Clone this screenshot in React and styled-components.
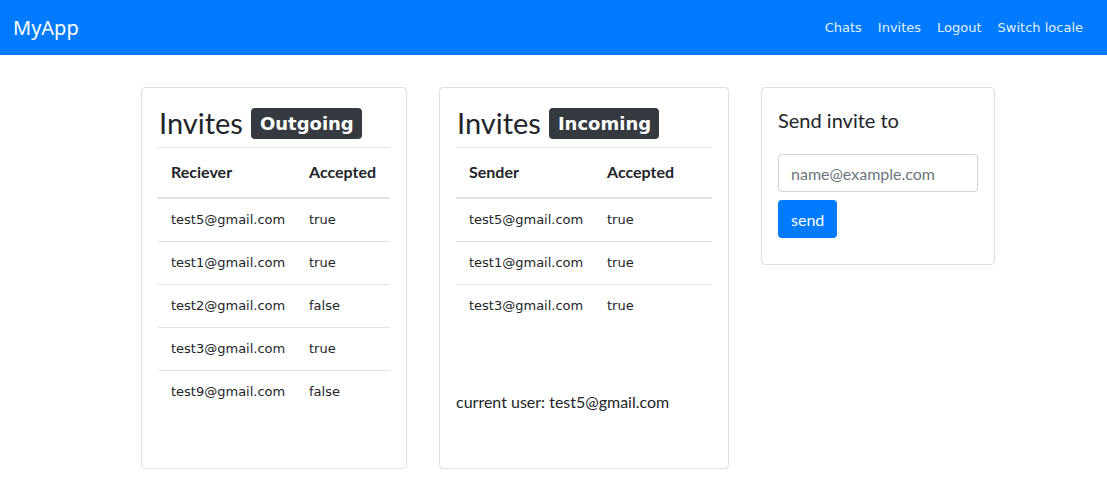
import styled, { createGlobalStyle } from 'styled-components';

const sans = `Lato, 'Segoe UI', 'Noto Sans', sans-serif`;
const verdana = `'DejaVu Sans', Verdana, sans-serif`;

const GlobalStyle = createGlobalStyle`
    body {
        margin: 0;
        background: #fff;
        color: #212529;
        font-family: ${sans};
    }
`

const Navbar = styled.nav`
    height: 55px;
    background: #007bff;
    display: flex;
    align-items: center;
    justify-content: space-between;
    padding: 0 24px 0 13px;
    box-sizing: border-box;
`

const Brand = styled.span`
    color: #fff;
    font-size: 20px;
    font-family: 'Noto Sans', sans-serif;
`

const NavLinks = styled.div`
    display: flex;
    gap: 16px;
`

const NavLink = styled.a`
    color: rgba(255, 255, 255, 0.9);
    font-family: ${verdana};
    font-size: 13px;
    text-decoration: none;
`

const Main = styled.main`
    display: flex;
    align-items: flex-start;
    gap: 32px;
    padding: 32px 0 0 141px;
`

const Card = styled.section`
    width: ${p => p.$width}px;
    min-width: 0;
    flex-shrink: 0;
    min-height: ${p => p.$minHeight || 0}px;
    box-sizing: border-box;
    border: 1px solid rgba(0, 0, 0, 0.125);
    border-radius: 4px;
    padding: ${p => p.$padding || '15px 16px 16px 16px'};
    display: flex;
    flex-direction: column;
`

const Heading = styled.h3`
    margin: 0;
    font-size: 29px;
    font-weight: 400;
    line-height: 40px;
    display: flex;
    align-items: center;
    gap: 8px;
    padding-left: 1px;
`

const Badge = styled.span`
    background: #343a40;
    color: #fff;
    font-family: ${verdana};
    font-weight: 700;
    font-size: 18px;
    line-height: 22px;
    padding: 5px 8px 4px 9px;
    border-radius: 4px;
`

const Rule = styled.hr`
    margin: 4px 0 0;
    border: 0;
    border-top: 1px solid rgba(0, 0, 0, 0.1);
`

const Table = styled.table`
    width: 100%;
    border-collapse: collapse;
    table-layout: fixed;

    th {
        text-align: left;
        font-weight: 700;
        font-size: 16px;
        line-height: 24px;
        padding: 12px 12px 13px 13px;
        border-bottom: 2px solid #dee2e6;
    }

    th:first-child {
        width: 113px;
    }

    td {
        font-family: ${verdana};
        font-size: 13px;
        line-height: 18px;
        padding: 12px 0 12px 13px;
        border-top: 1px solid #dee2e6;
        white-space: nowrap;
    }

    tbody tr:first-child td {
        border-top: 0;
    }
`

const CurrentUser = styled.p`
    margin: 63px 0 0;
    font-size: 16px;
    line-height: 24px;
`

const FormTitle = styled.h5`
    margin: 0 0 20px;
    font-size: 20px;
    font-weight: 400;
    line-height: 28px;
`

const Input = styled.input`
    width: 200px;
    height: 38px;
    box-sizing: border-box;
    border: 1px solid #ced4da;
    border-radius: 4px;
    padding: 6px 12px;
    font-family: ${sans};
    font-size: 16px;
    color: #495057;

    &::placeholder {
        color: #6c757d;
    }
`

const SendButton = styled.button`
    align-self: flex-start;
    margin-top: 8px;
    height: 38px;
    padding: 0 13px;
    border: 0;
    border-radius: 4px;
    background: #007bff;
    color: #fff;
    font-family: ${sans};
    font-size: 16px;
`

const outgoing = [
    ['test5@gmail.com', 'true'],
    ['test1@gmail.com', 'true'],
    ['test2@gmail.com', 'false'],
    ['test3@gmail.com', 'true'],
    ['test9@gmail.com', 'false'],
]

const incoming = [
    ['test5@gmail.com', 'true'],
    ['test1@gmail.com', 'true'],
    ['test3@gmail.com', 'true'],
]

function InviteTable({ who, rows }) {
    return (
        <Table>
            <thead>
                <tr>
                    <th>{who}</th>
                    <th>Accepted</th>
                </tr>
            </thead>
            <tbody>
                {rows.map(([email, accepted]) => (
                    <tr key={email}>
                        <td>{email}</td>
                        <td>{accepted}</td>
                    </tr>
                ))}
            </tbody>
        </Table>
    )
}

export default function App() {
    return (
        <>
            <GlobalStyle />
            <Navbar>
                <Brand>MyApp</Brand>
                <NavLinks>
                    <NavLink href="#">Chats</NavLink>
                    <NavLink href="#">Invites</NavLink>
                    <NavLink href="#">Logout</NavLink>
                    <NavLink href="#">Switch locale</NavLink>
                </NavLinks>
            </Navbar>

            <Main>
                <Card $width={266} $minHeight={382}>
                    <Heading>Invites <Badge>Outgoing</Badge></Heading>
                    <Rule />
                    <InviteTable who="Reciever" rows={outgoing} />
                </Card>

                <Card $width={290} $minHeight={382}>
                    <Heading>Invites <Badge>Incoming</Badge></Heading>
                    <Rule />
                    <InviteTable who="Sender" rows={incoming} />
                    <CurrentUser>current user: test5@gmail.com</CurrentUser>
                </Card>

                <Card $width={234} $padding="18px 16px 26px 16px">
                    <FormTitle>Send invite to</FormTitle>
                    <Input placeholder="name@example.com" />
                    <SendButton>send</SendButton>
                </Card>
            </Main>
        </>
    )
}
